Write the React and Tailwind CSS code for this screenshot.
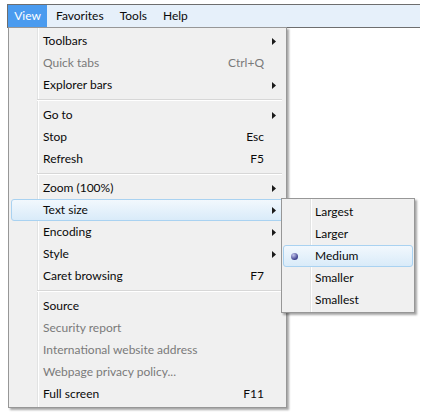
import React from "react";

const font = { fontFamily: "Lato, 'Liberation Sans', sans-serif" };

const items = [
  { label: "Toolbars", sub: true },
  { label: "Quick tabs", key: "Ctrl+Q", off: true },
  { label: "Explorer bars", sub: true },
  { sep: "h-[8px]" },
  { label: "Go to", sub: true },
  { label: "Stop", key: "Esc" },
  { label: "Refresh", key: "F5" },
  { sep: "h-[7px]" },
  { label: "Zoom (100%)", sub: true },
  { label: "Text size", sub: true, hot: true },
  { label: "Encoding", sub: true },
  { label: "Style", sub: true },
  { label: "Caret browsing", key: "F7" },
  { sep: "h-[8px]" },
  { label: "Source" },
  { label: "Security report", off: true },
  { label: "International website address", off: true },
  { label: "Webpage privacy policy...", off: true },
  { label: "Full screen", key: "F11" },
];

const sizes = ["Largest", "Larger", "Medium", "Smaller", "Smallest"];

const hot = "border-[#a9d2f1] bg-gradient-to-b from-[#f2f8fd] to-[#d9ebf9]";
const gutter =
  "bg-[linear-gradient(to_right,#f0f0f0_28px,#e2e3e3_28px,#e2e3e3_29px,#ffffff_29px,#ffffff_30px,#f0f0f0_30px)]";

function Arrow() {
  return (
    <svg width="4" height="7" viewBox="0 0 4 7">
      <path d="M0 0 L4 3.5 L0 7 Z" fill="#1a1a1a" />
    </svg>
  );
}

function MenuRow({ item }) {
  if (item.sep) {
    return (
      <div className={item.sep + " flex flex-col justify-center pl-[28px] pr-[4px]"}>
        <div className="h-px bg-[#d7d7d7]" />
        <div className="h-px bg-white" />
      </div>
    );
  }
  return (
    <div
      className={
        "h-[22px] mx-[2px] flex items-center pl-[31px] pr-[7px] text-[12px] rounded-[3px] border " +
        (item.hot ? hot : "border-transparent") +
        (item.off ? " text-[#7a7a7a]" : " text-[#0a0a0a]")
      }
    >
      <span className="flex-1">{item.label}</span>
      {item.key && <span className="mr-[8px]">{item.key}</span>}
      <span className="w-[4px] flex items-center">{item.sub && <Arrow />}</span>
    </div>
  );
}

export default function App() {
  return (
    <div className="relative w-[427px] h-[418px] bg-white overflow-hidden" style={font}>
      <div className="mt-[4px] ml-[7px] w-[413px] h-[24px] border-t border-l border-b border-[#6e6e6e] bg-[#e6f0fa] flex items-stretch text-[12px] text-[#0a0a0a]">
        <div className="w-[39px] bg-[#4a9bef] text-white flex items-center justify-center">View</div>
        <div className="flex items-center gap-[16px] pl-[9px]">
          <span>Favorites</span>
          <span>Tools</span>
          <span>Help</span>
        </div>
      </div>

      <div className={"absolute left-[8px] top-[27px] w-[279px] h-[381px] border border-[#979797] shadow-[2px_2px_2px_rgba(0,0,0,0.35)] py-[2px] " + gutter}>
        {items.map((it, i) => (
          <MenuRow key={i} item={it} />
        ))}
      </div>

      <div className={"absolute left-[281px] top-[198px] w-[134px] h-[115px] border border-[#979797] shadow-[2px_2px_2px_rgba(0,0,0,0.35)] py-[2px] " + gutter}>
        {sizes.map((s) => (
          <div
            key={s}
            className={
              "h-[22px] mx-[1px] flex items-center text-[12px] text-[#0a0a0a] rounded-[3px] border " +
              (s === "Medium" ? hot : "border-transparent")
            }
          >
            <span className="w-[20px] flex justify-center">
              {s === "Medium" && (
                <span className="w-[7px] h-[7px] rounded-full bg-[radial-gradient(circle_at_35%_30%,#c3c6ee,#3c3f8c_70%)]" />
              )}
            </span>
            <span className="ml-[11px]">{s}</span>
          </div>
        ))}
      </div>
    </div>
  );
}
